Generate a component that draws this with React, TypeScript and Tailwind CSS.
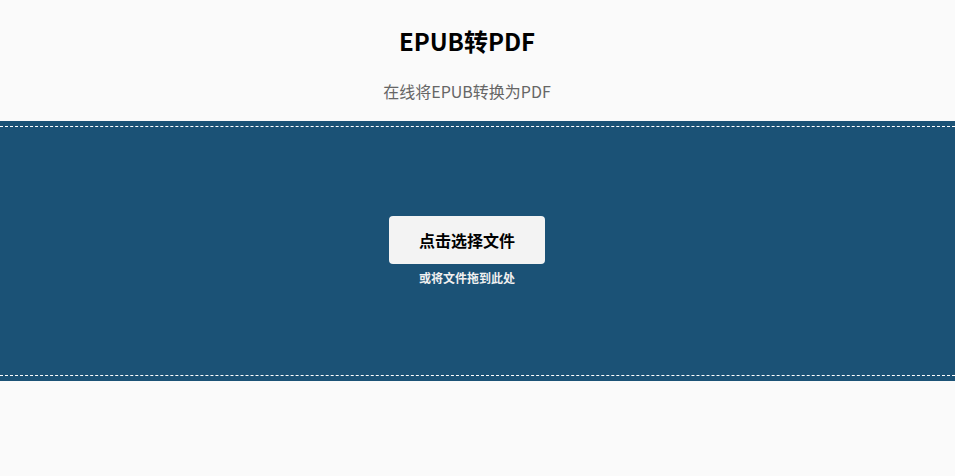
export default function App() {
  return (
    <div
      className="min-h-[476px] bg-[#fafafa] flex flex-col"
      style={{ fontFamily: '"Noto Sans CJK SC", "Noto Sans", sans-serif' }}
    >
      <header className="flex flex-col items-center pt-[23px] pb-[18px] pr-[21px]">
        <h1 className="text-[24px] leading-[36px] font-bold text-black">EPUB转PDF</h1>
        <p className="mt-[20px] text-[16px] leading-[24px] text-[#666666]">在线将EPUB转换为PDF</p>
      </header>
      <section className="h-[260px] bg-[#1b5276] py-[5px]">
        <div className="h-full border-y border-dashed border-white flex flex-col items-center justify-center pt-[1px] pr-[21px]">
          <button className="w-[156px] h-[48px] rounded-[4px] bg-[#f3f3f3] text-[16px] font-bold text-black">
            点击选择文件
          </button>
          <p className="mt-[5px] text-[12px] leading-[18px] font-bold text-[#f0f0f0]">或将文件拖到此处</p>
        </div>
      </section>
    </div>
  );
}
